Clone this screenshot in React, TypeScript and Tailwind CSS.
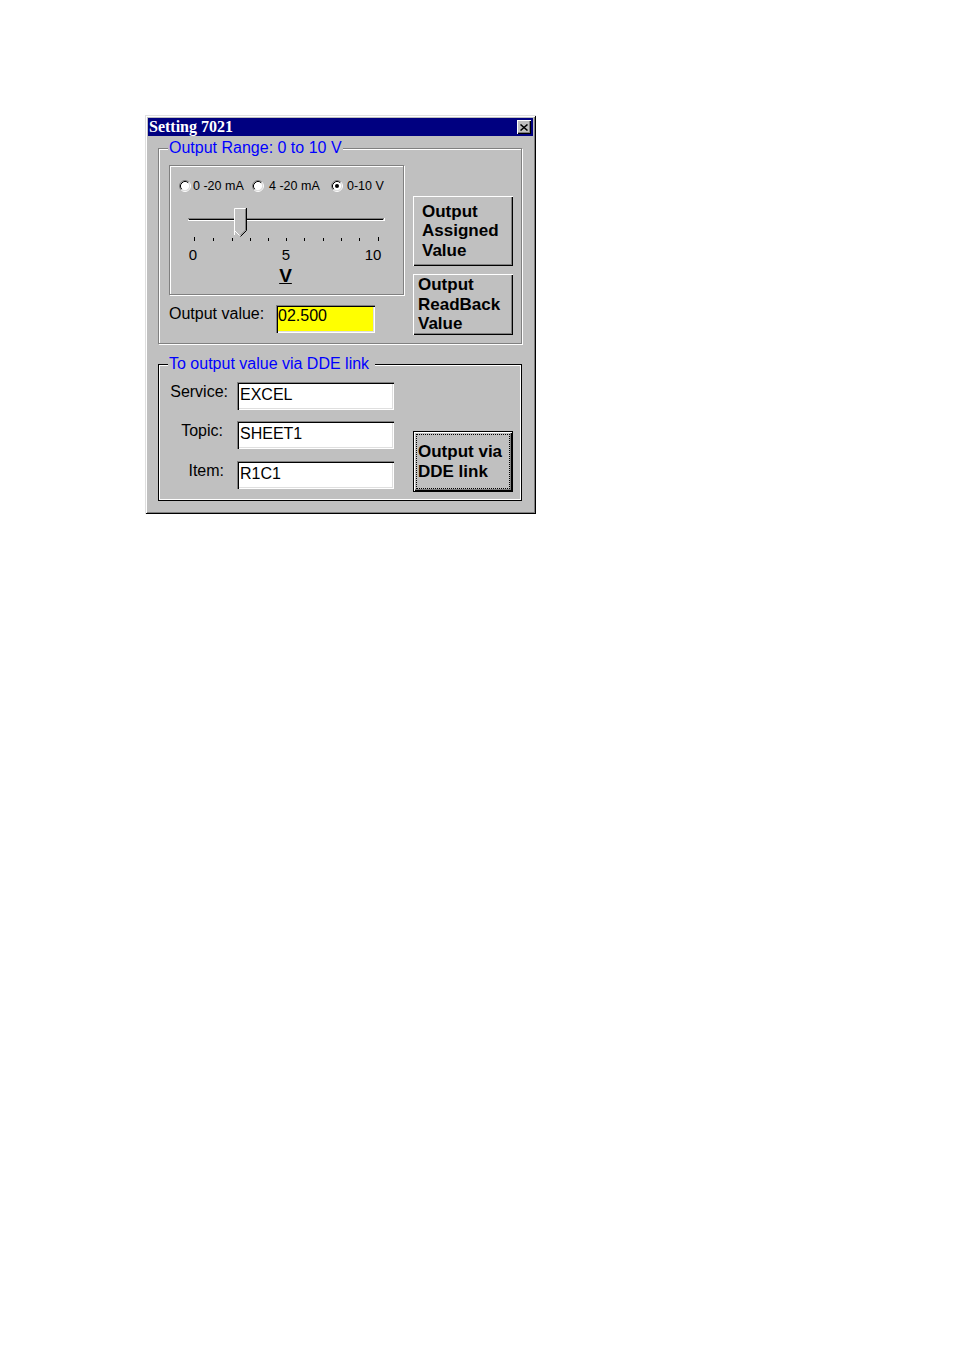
import React from "react";

const raised =
  "shadow-[inset_1px_1px_0_#fff,inset_-1px_-1px_0_#000,inset_-2px_-2px_0_#808080]";
const sunken =
  "shadow-[inset_1px_1px_0_#808080,inset_2px_2px_0_#000,inset_-1px_-1px_0_#fff,inset_-2px_-2px_0_#dfdfdf]";
const etched = "border border-[#808080] shadow-[1px_1px_0_#fff,inset_1px_1px_0_#fff]";

function Radio({ checked = false }: { checked?: boolean }) {
  return (
    <svg width="12" height="12" viewBox="0 0 12 12" className="shrink-0">
      <circle cx="6" cy="6" r="4.5" fill="#fff" />
      <path d="M2.11 9.89 A5.5 5.5 0 0 1 9.89 2.11" fill="none" stroke="#808080" />
      <path d="M9.89 2.11 A5.5 5.5 0 0 1 2.11 9.89" fill="none" stroke="#fff" />
      <path d="M2.82 9.18 A4.5 4.5 0 0 1 9.18 2.82" fill="none" stroke="#000" />
      <path d="M9.18 2.82 A4.5 4.5 0 0 1 2.82 9.18" fill="none" stroke="#dfdfdf" />
      {checked ? <circle cx="6" cy="6" r="2" fill="#000" /> : null}
    </svg>
  );
}

const ticks = [24, 43, 62, 80, 98, 116, 134, 153, 171, 189, 208];

function Slider() {
  return (
    <svg width="233" height="42" viewBox="0 0 233 42" className="mt-[10px] block">
      {/* channel */}
      <line x1="18" y1="15.5" x2="214" y2="15.5" stroke="#808080" />
      <line x1="19" y1="16.5" x2="213" y2="16.5" stroke="#000" />
      <line x1="18" y1="17.5" x2="215" y2="17.5" stroke="#fff" />
      <line x1="214.5" y1="15" x2="214.5" y2="18" stroke="#fff" />
      {/* thumb */}
      <path d="M64 5 H76 V27 L70 33 L64 27 Z" fill="#c0c0c0" />
      <path d="M64.5 32 V5.5 H75.5" fill="none" stroke="#fff" />
      <path d="M76.5 5 V27.5 L70.5 33.5" fill="none" stroke="#000" />
      <path d="M75.5 6 V27 L70.5 32" fill="none" stroke="#808080" />
      <path d="M64.5 27.5 L69.5 32.5" fill="none" stroke="#fff" />
      {ticks.map((x, i) => (
        <line
          key={x}
          x1={x + 0.5}
          y1={i === 0 || i === ticks.length - 1 ? 34 : 35}
          x2={x + 0.5}
          y2={38}
          stroke="#000"
        />
      ))}
    </svg>
  );
}

function CloseBox() {
  return (
    <div className={`flex h-[14px] w-[14px] items-center justify-center bg-[#c0c0c0] ${raised}`}>
      <svg width="8" height="7" viewBox="0 0 8 7">
        <path d="M0.5 0.5 L7.5 6.5 M7.5 0.5 L0.5 6.5" stroke="#000" strokeWidth="1.5" />
      </svg>
    </div>
  );
}

export default function App() {
  return (
    <div className="min-h-[1351px] w-full bg-white pl-[145px] pt-[115px] font-['Liberation_Sans',Arial,sans-serif] text-black">
      <div className="h-[399px] w-[391px] bg-[#c0c0c0] p-[3px] shadow-[inset_1px_1px_0_#dfdfdf,inset_-1px_-1px_0_#000,inset_2px_2px_0_#fff,inset_-2px_-2px_0_#808080]">
        {/* title bar */}
        <div className="flex h-[18px] items-center justify-between bg-[#000080] pl-[1px] pr-[2px]">
          <span className="font-['Liberation_Serif',serif] text-[16px] font-bold leading-[18px] text-white">
            Setting 7021
          </span>
          <CloseBox />
        </div>

        <div className="px-[10px] pt-[12px]">
          {/* output range group */}
          <div className={`relative h-[196px] w-[364px] ${etched}`}>
            <span className="absolute left-[9px] top-[-10px] bg-[#c0c0c0] px-[1px] text-[16px] leading-[18px] text-[#0000ff]">
              Output Range: 0 to 10 V
            </span>
            <div className="flex items-start pl-[10px]">
              <div className="mt-[16px] w-[235px]">
                <div className={`flex h-[130px] flex-col ${etched}`}>
                  <div className="mt-[13px] flex h-[14px] items-center pl-[9px] text-[12.5px] leading-[14px]">
                    <Radio />
                    <span className="ml-[2px] w-[52px] whitespace-nowrap">0 -20 mA</span>
                    <span className="ml-[7px] flex">
                      <Radio />
                    </span>
                    <span className="ml-[5px] w-[51px] whitespace-nowrap">4 -20 mA</span>
                    <span className="ml-[11px] flex">
                      <Radio checked />
                    </span>
                    <span className="ml-[4px] whitespace-nowrap">0-10 V</span>
                  </div>
                  <Slider />
                  <div className="mt-[1px] flex h-[17px] text-[15px] leading-[17px]">
                    <span className="ml-[13px] w-[20px] text-center">0</span>
                    <span className="ml-[73px] w-[20px] text-center">5</span>
                    <span className="ml-[67px] w-[20px] text-center">10</span>
                  </div>
                  <div className="mt-[2px] h-[22px] pr-[2px] text-center text-[19px] font-bold leading-[22px] underline">
                    V
                  </div>
                </div>
                <div className="mt-[10px] flex h-[28px] items-start">
                  <span className="w-[107px] text-[16px] leading-[18px]">Output value:</span>
                  <div className={`h-[28px] w-[99px] bg-[#ffff00] pl-[2px] pt-[2px] text-[16px] leading-[18px] ${sunken}`}>
                    02.500
                  </div>
                </div>
              </div>

              <div className="ml-[9px] mt-[47px] flex w-[100px] flex-col text-[17px] font-bold leading-[19.5px]">
                <div className={`flex h-[70px] items-center pl-[9px] ${raised}`}>
                  <span>
                    Output
                    <br />
                    Assigned
                    <br />
                    Value
                  </span>
                </div>
                <div className={`mt-[8px] flex h-[61px] items-center pl-[5px] ${raised}`}>
                  <span>
                    Output
                    <br />
                    ReadBack
                    <br />
                    Value
                  </span>
                </div>
              </div>
            </div>
          </div>

          {/* DDE group */}
          <div className="relative mt-[20px] h-[137px] w-[364px] border border-black shadow-[inset_1px_1px_0_#fff,inset_-1px_-1px_0_#fff]">
            <span className="absolute left-[9px] top-[-10px] bg-[#c0c0c0] pl-[1px] pr-[6px] text-[16px] leading-[18px] text-[#0000ff]">
              To output value via DDE link
            </span>
            <div className="flex items-start pl-[10px]">
              <div className="mt-[17px] flex flex-col text-[16px] leading-[18px]">
                <div className="flex h-[28px]">
                  <span className="w-[68px] pr-[9px] pt-[1px] text-right">Service:</span>
                  <div className={`h-[28px] w-[157px] bg-white pl-[3px] pt-[4px] ${sunken}`}>EXCEL</div>
                </div>
                <div className="mt-[11px] flex h-[28px]">
                  <span className="w-[68px] pr-[14px] pt-[1px] text-right">Topic:</span>
                  <div className={`h-[28px] w-[157px] bg-white pl-[3px] pt-[4px] ${sunken}`}>SHEET1</div>
                </div>
                <div className="mt-[12px] flex h-[28px]">
                  <span className="w-[68px] pr-[13px] pt-[1px] text-right">Item:</span>
                  <div className={`h-[28px] w-[157px] bg-white pl-[3px] pt-[4px] ${sunken}`}>R1C1</div>
                </div>
              </div>

              <div className="ml-[19px] mt-[66px] h-[61px] w-[100px] border border-black">
                <div className={`h-full w-full p-[2px] ${raised}`}>
                  <div className="flex h-full w-full items-center border border-dotted border-black pl-[1px] text-[17px] font-bold leading-[19.5px]">
                    <span>
                      Output via
                      <br />
                      DDE link
                    </span>
                  </div>
                </div>
              </div>
            </div>
          </div>
        </div>
      </div>
    </div>
  );
}
